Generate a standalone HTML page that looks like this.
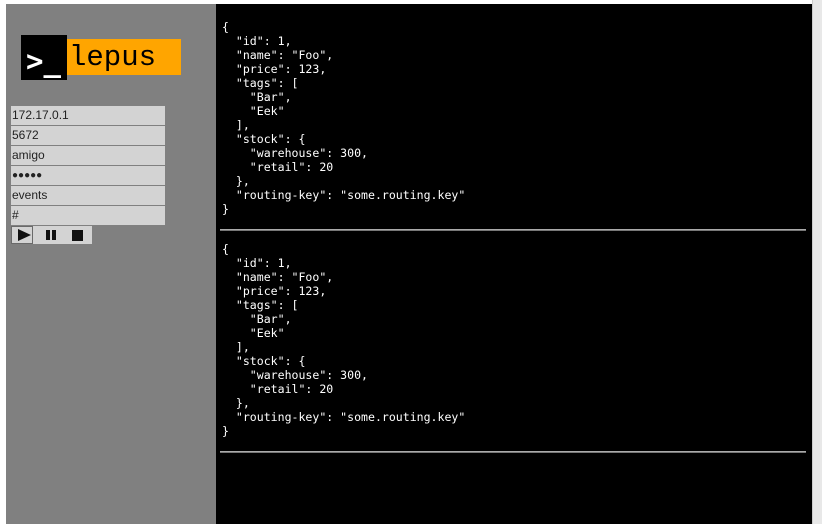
<!DOCTYPE html>
<html><head><meta charset="utf-8"><style>
*{margin:0;padding:0;box-sizing:border-box}
body{width:822px;height:524px;background:#fff;position:relative;overflow:hidden;font-family:"Liberation Sans",sans-serif}
#side{position:absolute;left:6px;top:4px;width:210px;height:520px;background:#808080}
#main{position:absolute;left:216px;top:4px;width:596px;height:520px;background:#000}
#sb{position:absolute;left:812px;top:0;width:10px;height:524px;background:#e8e8e8;border-left:1px solid #ccc}
.logo1{position:absolute;left:21px;top:35px;width:46px;height:45px;background:#000}
.logo2{position:absolute;left:67px;top:39px;width:114px;height:36px;background:#ffa500}
.lg{position:absolute;left:26px;top:44px;font:bold 29px "DejaVu Sans Mono",monospace;color:#fff;white-space:pre}
.lt{position:absolute;left:69px;top:41px;font:29px "Liberation Mono",monospace;color:#000;white-space:pre}
.inp{position:absolute;left:11px;width:154px;height:19px;background:#d3d3d3;font-size:12px;color:#222;padding:2px 1px;line-height:15px}
.btns{position:absolute;left:11px;top:226px;width:81px;height:18px;background:#d3d3d3}
pre{position:absolute;left:222px;font:11.55px/14px "DejaVu Sans Mono","Liberation Mono",monospace;color:#fff}
.hr{position:absolute;left:220px;width:586px;height:2px;background:#aaa;border-bottom:1px solid #777}
</style></head><body>
<div id="side"></div><div id="main"></div><div id="sb"></div>
<div class="logo1"></div><div class="logo2"></div>
<div class="lg">&gt;_</div>
<div class="lt">lepus</div>
<div class="inp" style="top:106px">172.17.0.1</div>
<div class="inp" style="top:126px">5672</div>
<div class="inp" style="top:146px">amigo</div>
<div class="inp" style="top:166px;font-size:10px">●●●●●</div>
<div class="inp" style="top:186px">events</div>
<div class="inp" style="top:206px">#</div>
<div class="btns">
<svg width="81" height="18" style="position:absolute;left:0;top:0">
<rect x="0.5" y="0.5" width="21" height="17" fill="none" stroke="#000" stroke-dasharray="1 1"/>
<path d="M7 3 L20 9 L7 15Z" fill="#111"/>
<rect x="35" y="4" width="4" height="10" fill="#111"/><rect x="41" y="4" width="4" height="10" fill="#111"/>
<rect x="61" y="4" width="11" height="11" fill="#111"/>
</svg></div>
<pre style="top:20px">{
  "id": 1,
  "name": "Foo",
  "price": 123,
  "tags": [
    "Bar",
    "Eek"
  ],
  "stock": {
    "warehouse": 300,
    "retail": 20
  },
  "routing-key": "some.routing.key"
}</pre>
<div class="hr" style="top:229px"></div>
<pre style="top:242px">{
  "id": 1,
  "name": "Foo",
  "price": 123,
  "tags": [
    "Bar",
    "Eek"
  ],
  "stock": {
    "warehouse": 300,
    "retail": 20
  },
  "routing-key": "some.routing.key"
}</pre>
<div class="hr" style="top:451px"></div>
</body></html>
